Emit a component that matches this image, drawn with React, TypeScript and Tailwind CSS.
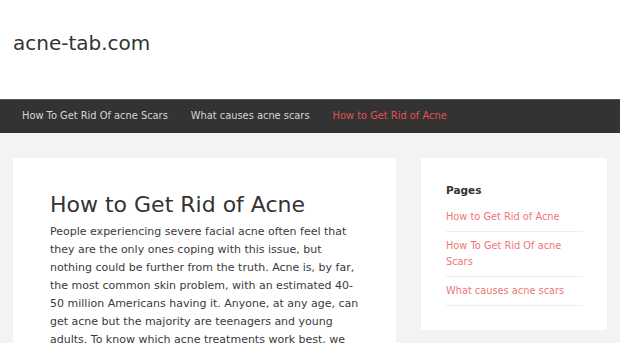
import React from "react";

const navLinks = [
  { label: "How To Get Rid Of acne Scars", active: false },
  { label: "What causes acne scars", active: false },
  { label: "How to Get Rid of Acne", active: true },
];

const pages = ["How to Get Rid of Acne", "How To Get Rid Of acne Scars", "What causes acne scars"];

export default function App() {
  return (
    <div className="h-[343px] overflow-hidden bg-[#f3f3f3] font-['DejaVu_Sans',sans-serif] text-[#333]">
      {/* Header */}
      <header className="h-[99px] bg-white px-[13px] pt-[31px]">
        <div className="text-[20px] leading-[24px] text-[#333]">acne-tab.com</div>
      </header>

      {/* Nav */}
      <nav className="flex h-[34px] items-center gap-[23px] border-t border-[#555] bg-[#333] px-[22px]">
        {navLinks.map((l) => (
          <a
            key={l.label}
            className={"text-[9.85px] " + (l.active ? "text-[#e05252]" : "text-[#d6d6d6]")}
          >
            {l.label}
          </a>
        ))}
      </nav>

      {/* Content */}
      <div className="flex items-start gap-[25px] px-[13px] pt-[25px]">
        <main className="w-[384px] rounded-[2px] bg-white pt-[32px] pr-[36px] pb-[20px] pl-[37px]">
          <h1 className="text-[22px] leading-[30px] text-[#333]">How to Get Rid of Acne</h1>
          <p className="mt-[3px] text-[11px] leading-[18px] text-[#3a3a3a]">
            People experiencing severe facial acne often feel that they are the only ones coping with
            this issue, but nothing could be further from the truth. Acne is, by far, the most common
            skin problem, with an estimated 40-50 million Americans having it. Anyone, at any age, can
            get acne but the majority are teenagers and young adults. To know which acne treatments
            work best, we
          </p>
        </main>

        <aside className="w-[186px] rounded-[2px] bg-white px-[25px] pt-[24px] pb-[24px]">
          <h2 className="text-[10.5px] font-bold leading-[16px] text-[#333]">Pages</h2>
          <ul className="mt-[5px] w-[137px]">
            {pages.map((p) => (
              <li
                key={p}
                className="border-b border-[#eee] py-[6px] text-[9.8px] leading-[16px] text-[#f07575]"
              >
                {p}
              </li>
            ))}
          </ul>
        </aside>
      </div>
    </div>
  );
}
